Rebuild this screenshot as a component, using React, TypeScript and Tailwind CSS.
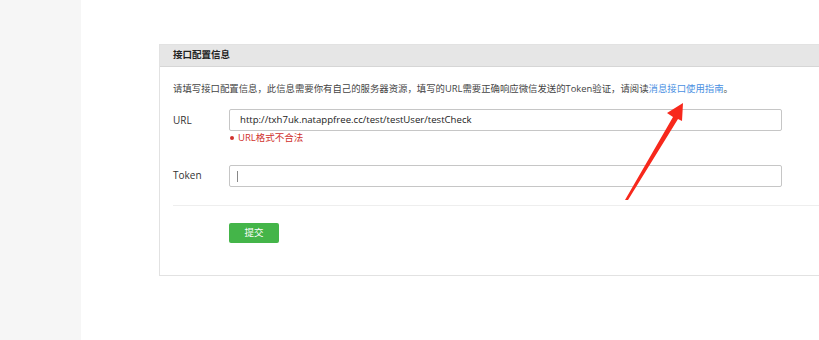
import React from 'react';

const font = { fontFamily: '"Open Sans", "Noto Sans CJK SC", sans-serif' };

const Arrow: React.FC = () => (
  <svg className="pointer-events-none absolute left-0 top-0" width="819" height="340" viewBox="0 0 819 340">
    <polygon
      points="625,200 673,117 667,113 683,103 682,121 678,119 628,200"
      fill="#f7281c"
    />
  </svg>
);

export default function App() {
  return (
    <div className="relative flex h-[340px] w-[819px] overflow-hidden bg-white text-[#333]" style={font}>
      <div className="w-[81px] shrink-0 bg-[#f6f6f6]" />
      <div className="flex-1 overflow-hidden pl-[78px] pt-[44px]">
        <div className="w-[700px] border-y border-l border-[#e2e2e2]">
          <div className="flex h-[22px] items-center border-b border-[#d6d6d6] bg-[#e6e6e6] pl-[13px] text-[9.5px] font-bold text-[#222]">
            接口配置信息
          </div>
          <div className="px-[13px]">
            <p className="pt-[15px] text-[9.4px] leading-[14px] text-[#444]">
              请填写接口配置信息，此信息需要你有自己的服务器资源，填写的URL需要正确响应微信发送的Token验证，请阅读
              <a className="text-[#4a90e2]">消息接口使用指南</a>。
            </p>
            <div className="mt-[13px] flex items-start">
              <label className="w-[56px] pt-[4px] text-[10px] leading-[14px] text-[#333]">URL</label>
              <div>
                <div className="flex h-[22px] w-[553px] items-center rounded-[2px] border border-[#c6c6c6] pl-[10px] text-[9.6px] text-[#222]">
                  http://txh7uk.natappfree.cc/test/testUser/testCheck
                </div>
                <div className="flex items-center gap-[4px] pl-[1px] text-[9.5px] leading-[14px] text-[#d0312d]">
                  <span className="h-[4px] w-[4px] rounded-full bg-[#d0312d]" />
                  URL格式不合法
                </div>
              </div>
            </div>
            <div className="mt-[20px] flex items-start">
              <label className="w-[56px] pt-[3px] text-[10px] leading-[14px] text-[#333]">Token</label>
              <div className="flex h-[22px] w-[553px] items-center rounded-[2px] border border-[#c6c6c6] pl-[7px]">
                <span className="h-[11px] w-px bg-[#888]" />
              </div>
            </div>
            <div className="mt-[18px] border-t border-[#eeeeee]" />
            <div className="pb-[32px] pl-[56px] pt-[17px]">
              <button className="flex h-[20px] w-[50px] items-center justify-center rounded-[2px] bg-[#44b549] text-[9.5px] text-white">
                提交
              </button>
            </div>
          </div>
        </div>
      </div>
      <Arrow />
    </div>
  );
}
